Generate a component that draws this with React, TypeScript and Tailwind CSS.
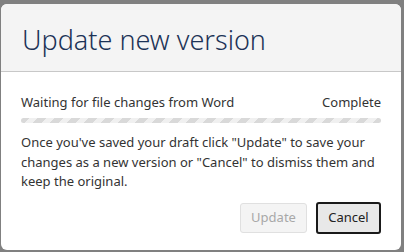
export default function App() {
  return (
    <div className="w-[404px] h-[252px] bg-[#808080] overflow-hidden relative" style={{ fontFamily: '"Noto Sans", sans-serif' }}>
      <div className="absolute left-[1px] top-[4px] w-[400px] h-[246px] bg-white rounded-[6px] overflow-hidden flex flex-col">
        <div className="h-[68px] bg-[#f4f4f4] border-b border-[#c8c8c8] flex items-center px-[21px] pt-[3px]">
          <h1 className="text-[27px] leading-none text-[#1c3357] font-light">Update new version</h1>
        </div>
        <div className="px-[20px] pt-[21px] flex flex-col">
          <div className="flex justify-between text-[13px] text-[#333] leading-[18px]">
            <span>Waiting for file changes from Word</span>
            <span>Complete</span>
          </div>
          <div
            className="mt-[7px] h-[5px] rounded-full"
            style={{ backgroundImage: 'repeating-linear-gradient(135deg, #d9d9d9 0 6px, #f0f0f0 6px 12px)' }}
          />
          <p className="mt-[10px] text-[13px] leading-[19.5px] text-[#333]">
            Once you've saved your draft click "Update" to save your changes as a new version or "Cancel" to dismiss them and keep the original.
          </p>
          <div className="flex justify-end items-center gap-[9px] mt-[10px]">
            <button disabled className="w-[67px] h-[30px] bg-[#f4f4f4] border border-[#e0e0e0] rounded-[3px] text-[13px] text-[#a8a8a8]">Update</button>
            <button className="w-[65px] h-[32px] bg-[#e8e8e8] border-2 border-[#1a1a1a] rounded-[3px] text-[13px] text-[#222]">Cancel</button>
          </div>
        </div>
      </div>
    </div>
  );
}
